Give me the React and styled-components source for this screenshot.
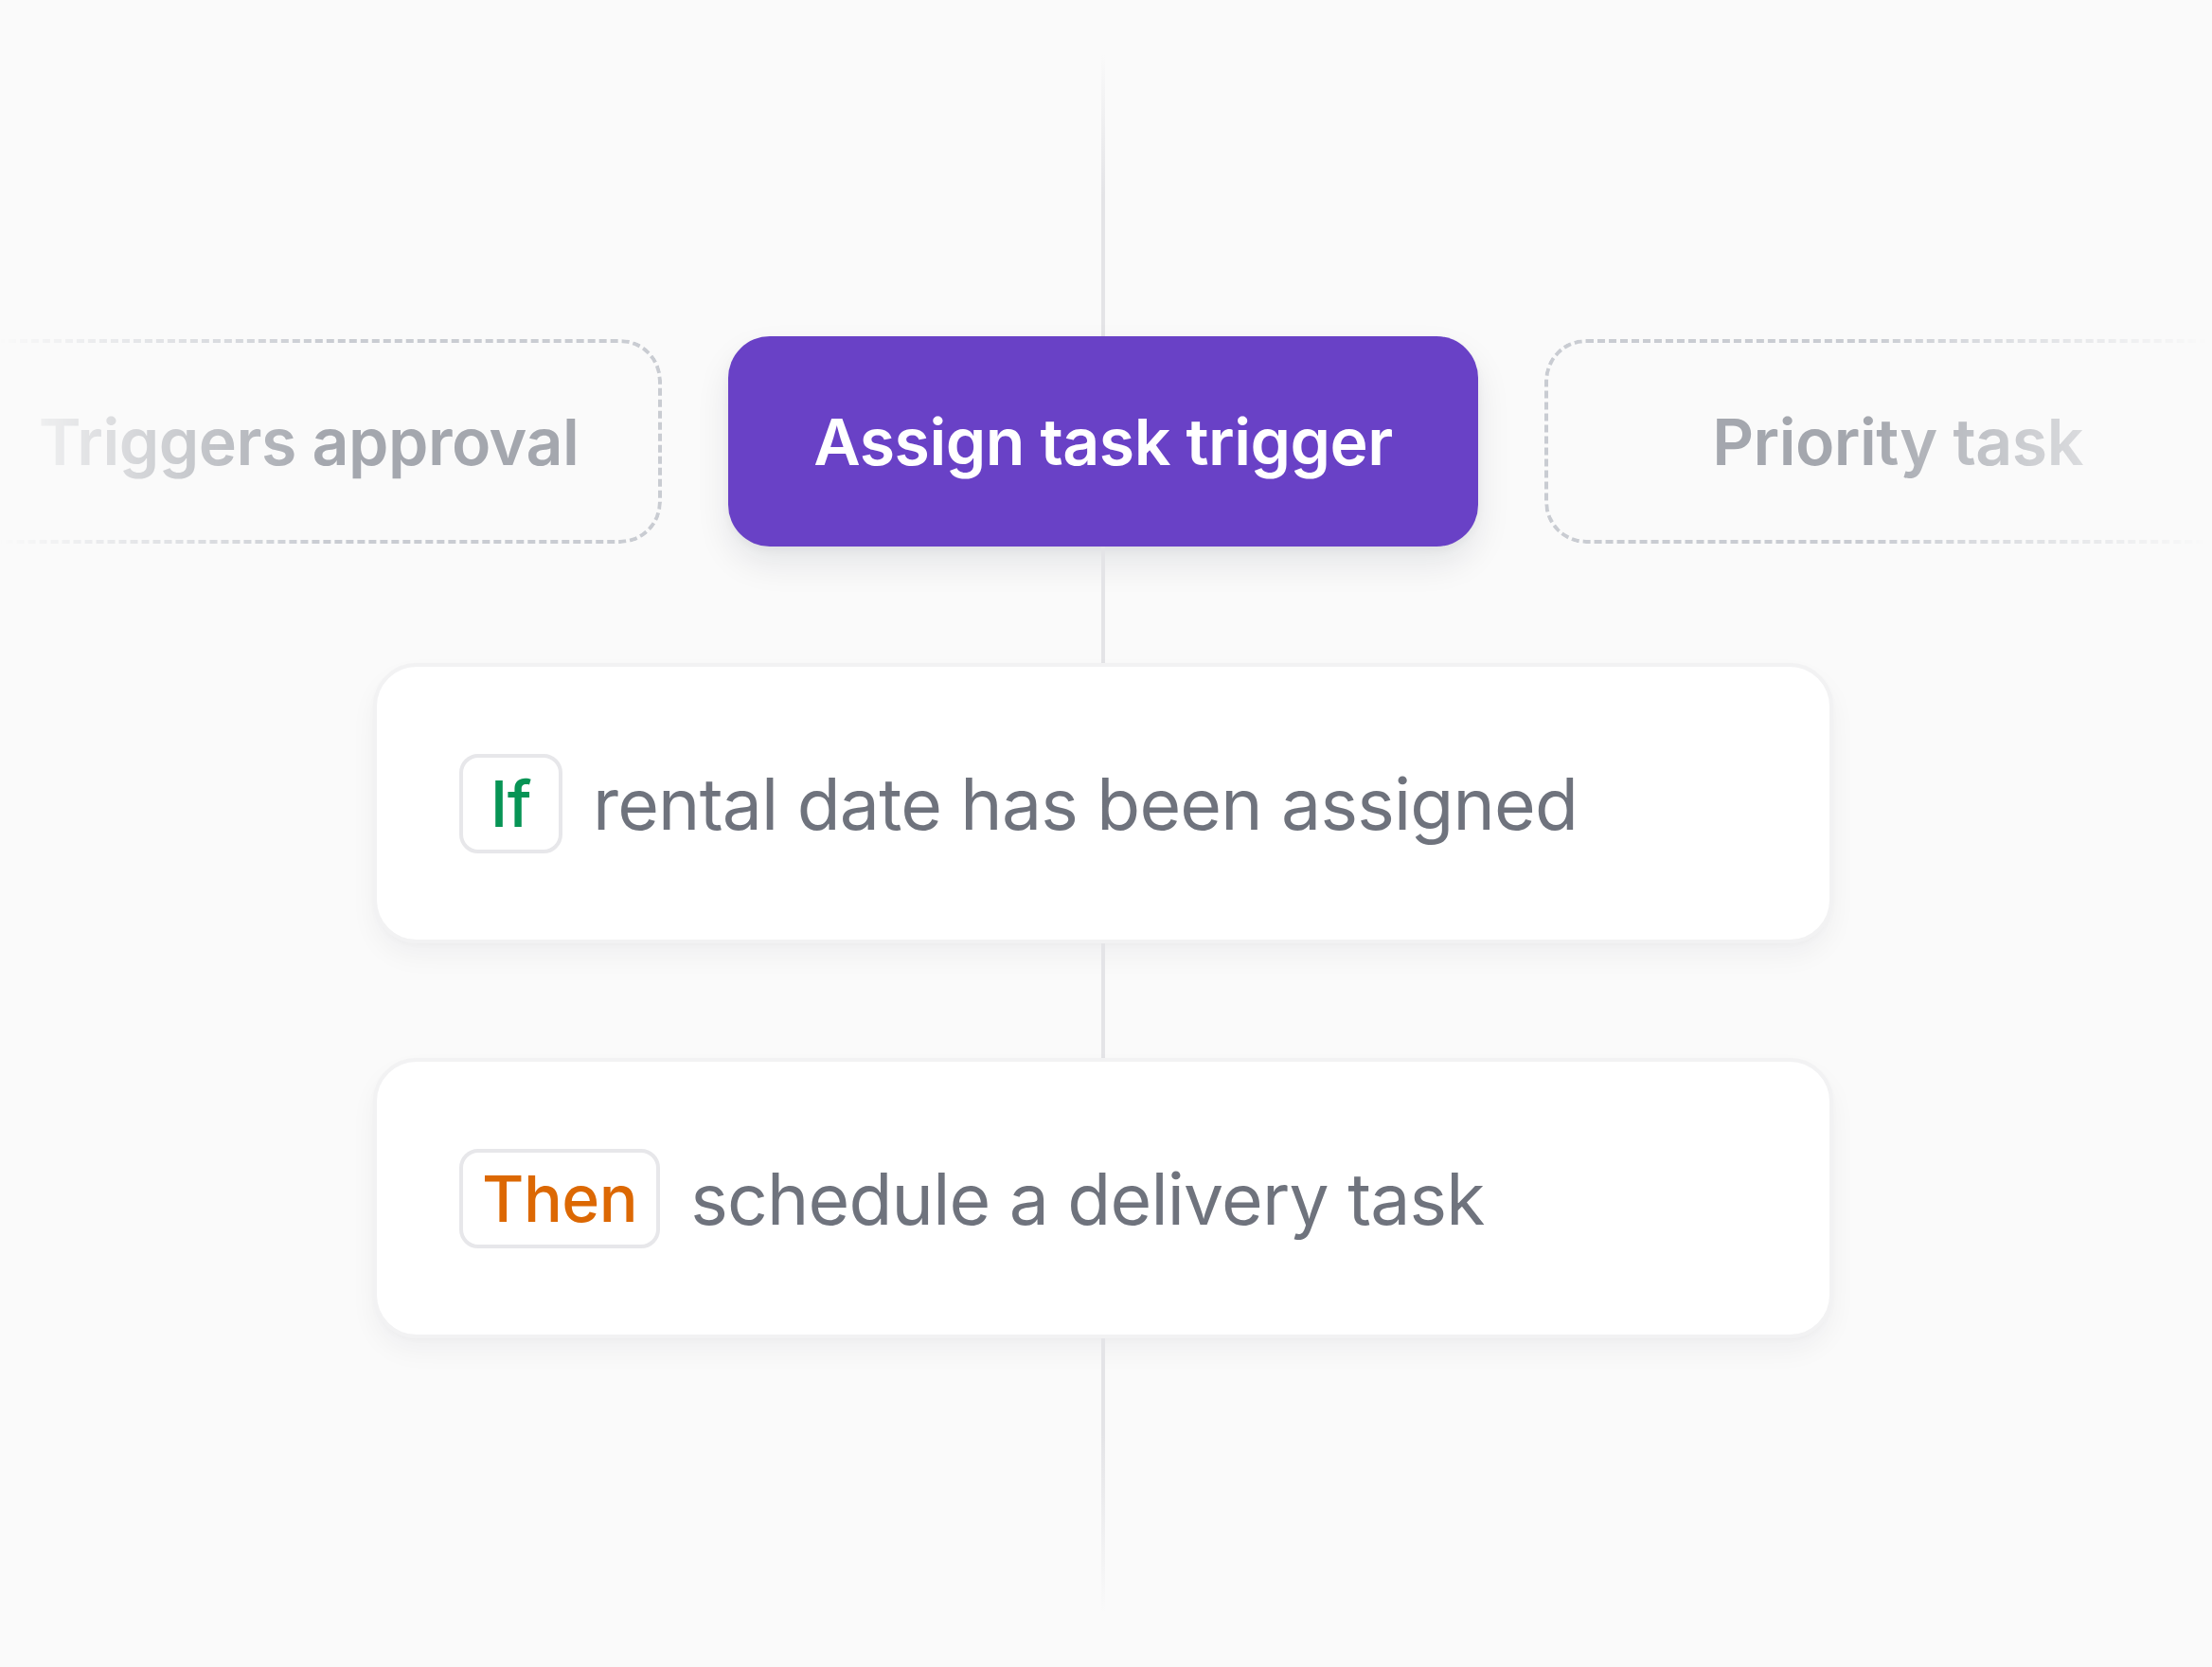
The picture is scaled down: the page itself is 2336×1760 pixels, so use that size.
import React from 'react';
import styled, { createGlobalStyle } from 'styled-components';

const GlobalStyle = createGlobalStyle`
  html, body {
    margin: 0;
    padding: 0;
    background: #fafafa;
  }
  body {
    font-family: Inter, 'Noto Sans', 'Liberation Sans', sans-serif;
  }
`;

const triggers = [
  { label: 'Triggers approval', fade: 'left' },
  { label: 'Assign task trigger', active: true },
  { label: 'Priority task', fade: 'right' },
];

const rules = [
  { word: 'If', tone: 'if', text: 'rental date has been assigned' },
  { word: 'Then', tone: 'then', text: 'schedule a delivery task' },
];

export default function App() {
  return (
    <>
      <GlobalStyle />
      <Stage>
        <Connector size={355} fadeTop />
        <TriggerRow>
          {triggers.map((t) => (t.active ? (
            <ActiveTrigger key={t.label}>{t.label}</ActiveTrigger>
          ) : (
            <GhostTrigger key={t.label} fade={t.fade}>{t.label}</GhostTrigger>
          )))}
        </TriggerRow>
        <Connector size={123} />
        <RuleCard>
          <Badge tone={rules[0].tone}>{rules[0].word}</Badge>
          <RuleText>{rules[0].text}</RuleText>
        </RuleCard>
        <Connector size={121} />
        <RuleCard>
          <Badge tone={rules[1].tone}>{rules[1].word}</Badge>
          <RuleText>{rules[1].text}</RuleText>
        </RuleCard>
        <Connector size={290} fadeBottom />
      </Stage>
    </>
  );
}

const Stage = styled.div`
width: 2330px;
height: 1760px;
overflow: hidden;
display: flex;
flex-direction: column;
align-items: center;
`;

const Connector = styled.div`
flex-shrink: 0;
width: 4px;
height: ${(p) => p.size}px;
background: ${(p) => {
    if (p.fadeTop) return 'linear-gradient(to bottom, rgba(228,228,231,0) 16%, #e4e4e7 58%)';
    if (p.fadeBottom) return 'linear-gradient(to bottom, #e4e4e7 35%, rgba(228,228,231,0) 100%)';
    return '#e4e4e7';
  }};
`;

const TriggerRow = styled.div`
width: 100%;
display: flex;
align-items: center;
justify-content: center;
gap: 70px;
`;

const ActiveTrigger = styled.div`
flex-shrink: 0;
box-sizing: border-box;
width: 792px;
height: 222px;
border-radius: 44px;
background: #6941c6;
color: #ffffff;
display: flex;
align-items: center;
justify-content: center;
font-size: 68px;
font-weight: 600;
letter-spacing: -0.5px;
box-shadow: 0 18px 36px rgba(16, 24, 40, 0.09), 0 4px 10px rgba(16, 24, 40, 0.04);
`;

const GhostTrigger = styled.div`
flex-shrink: 0;
box-sizing: border-box;
width: 746px;
height: 216px;
border: 4px dashed #c9ccd2;
border-radius: 44px;
color: #a4a7ae;
display: flex;
align-items: center;
justify-content: center;
font-size: 68px;
font-weight: 600;
letter-spacing: -0.5px;
-webkit-mask-image: ${(p) => (p.fade === 'left'
    ? 'linear-gradient(to right, transparent 6%, black 52%)'
    : 'linear-gradient(to left, transparent 6%, black 54%)')};
mask-image: ${(p) => (p.fade === 'left'
    ? 'linear-gradient(to right, transparent 6%, black 52%)'
    : 'linear-gradient(to left, transparent 6%, black 54%)')};
`;

const RuleCard = styled.div`
flex-shrink: 0;
box-sizing: border-box;
width: 1542px;
height: 296px;
padding-left: 87px;
background: #ffffff;
border: 4px solid #f2f2f3;
border-radius: 46px;
display: flex;
align-items: center;
gap: 32px;
box-shadow: 0 14px 28px rgba(16, 24, 40, 0.045), 0 2px 6px rgba(16, 24, 40, 0.02);
`;

const Badge = styled.span`
box-sizing: border-box;
min-width: 109px;
height: 105px;
padding: 0 20px;
border: 4px solid #e7e7ea;
border-radius: 20px;
display: inline-flex;
align-items: center;
justify-content: center;
font-size: 68px;
font-weight: 500;
letter-spacing: -0.5px;
color: ${(p) => (p.tone === 'if' ? '#079455' : '#dc6803')};
`;

const RuleText = styled.span`
font-size: 75px;
font-weight: 400;
letter-spacing: -0.8px;
color: #6f737d;
white-space: nowrap;
`;
